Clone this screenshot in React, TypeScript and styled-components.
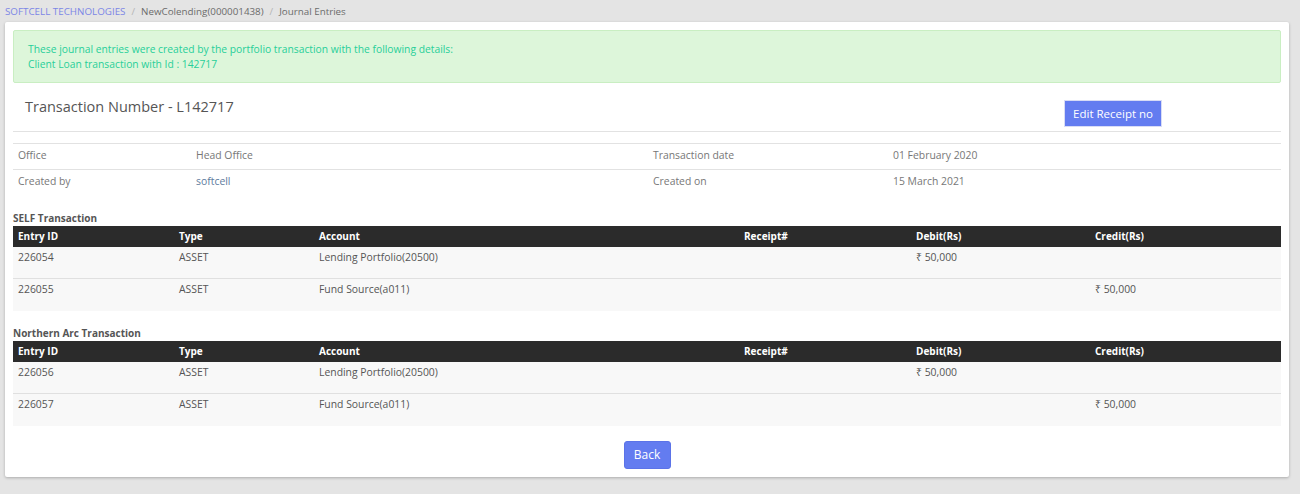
import React from "react";
import styled, { createGlobalStyle } from "styled-components";

const GlobalStyle = createGlobalStyle`
    html, body {
        margin: 0;
        padding: 0;
        background: #e4e4e4;
        font-family: "Open Sans", "Noto Sans", sans-serif;
        color: #666;
    }
    * { box-sizing: border-box; }
`;

const Page = styled.div`
    width: 1300px;
    height: 494px;
    padding: 0 11px 0 5px;
`;

const Breadcrumb = styled.nav`
    height: 22px;
    display: flex;
    align-items: center;
    font-size: 9.8px;
    color: #6b6b6b;
    white-space: nowrap;
`;

const Crumb = styled.span<{ $link?: boolean }>`
    color: ${(p) => (p.$link ? "#7c86e6" : "#6b6b6b")};
`;

const Sep = styled.span`
    color: #b5b5b5;
    margin: 0 6px;
`;

const Card = styled.div`
    background: #fff;
    padding: 8px;
    box-shadow: 0 1px 3px rgba(0, 0, 0, 0.25);
    border-radius: 2px;
    height: 455px;
`;

const Alert = styled.div`
    background: #ddf6da;
    border: 1px solid #c9eec2;
    border-radius: 2px;
    color: #27cf99;
    font-size: 10.3px;
    line-height: 15px;
    padding: 11px 14px 12px;
    height: 53px;
`;

const Header = styled.div`
    display: flex;
    justify-content: space-between;
    align-items: flex-start;
    padding: 14px 119px 4px 12px;
    border-bottom: 1px solid #e2e2e2;
    height: 49px;
`;

const Title = styled.h2`
    margin: 0;
    font-weight: 400;
    font-size: 14.5px;
    color: #555;
`;

const Button = styled.button<{ $radius?: number }>`
    background: #637cf0;
    color: #fff;
    border: 1px solid ${(p) => (p.$radius ? "#5b73e8" : "#d8dcf5")};
    border-radius: ${(p) => p.$radius ?? 0}px;
    font-family: "Open Sans", sans-serif;
    font-size: 11.5px;
    padding: 0 8px;
    height: 27px;
    margin-top: 3px;
`;

const InfoTable = styled.table`
    width: 100%;
    border-collapse: collapse;
    margin-top: 11px;
    font-size: 10.4px;
    color: #777;

    td {
        border-top: 1px solid #e2e2e2;
        padding: 0 5px 4px;
        height: 26px;
        vertical-align: middle;
    }
`;

const Value = styled.span<{ $accent?: boolean }>`
    color: ${(p) => (p.$accent ? "#5e7c9e" : "#777")};
`;

const SectionTitle = styled.div`
    font-size: 10px;
    font-weight: 700;
    color: #555;
    margin-top: 16px;
    height: 14px;
    line-height: 12px;
`;

const Grid = styled.table`
    width: 100%;
    border-collapse: collapse;
    font-size: 10.4px;

    th {
        background: #2b2b2b;
        color: #fff;
        font-weight: 700;
        text-align: left;
        padding: 0 5px;
        height: 21px;
        font-size: 10px;
    }

    td {
        background: #f8f8f8;
        color: #555;
        padding: 3px 5px 0;
        height: 32px;
        vertical-align: top;
        border-top: 1px solid #e0e0e0;
    }

    tbody tr:first-child td {
        border-top: none;
    }
`;

const Footer = styled.div`
    display: flex;
    justify-content: center;
    padding-top: 15px;
`;

const BackButton = styled(Button)`
    height: 28px;
    width: 47px;
    padding: 0;
    font-size: 12px;
    margin: 0;
`;

type Entry = { id: string; type: string; account: string; debit?: string; credit?: string };

const sections: { title: string; entries: Entry[] }[] = [
    {
        title: "SELF Transaction",
        entries: [
            { id: "226054", type: "ASSET", account: "Lending Portfolio(20500)", debit: "₹ 50,000" },
            { id: "226055", type: "ASSET", account: "Fund Source(a011)", credit: "₹ 50,000" },
        ],
    },
    {
        title: "Northern Arc Transaction",
        entries: [
            { id: "226056", type: "ASSET", account: "Lending Portfolio(20500)", debit: "₹ 50,000" },
            { id: "226057", type: "ASSET", account: "Fund Source(a011)", credit: "₹ 50,000" },
        ],
    },
];

const EntryTable = ({ entries }: { entries: Entry[] }) => (
    <Grid>
        <colgroup>
            <col style={{ width: 161 }} />
            <col style={{ width: 140 }} />
            <col style={{ width: 425 }} />
            <col style={{ width: 172 }} />
            <col style={{ width: 179 }} />
            <col />
        </colgroup>
        <thead>
            <tr>
                <th>Entry ID</th>
                <th>Type</th>
                <th>Account</th>
                <th>Receipt#</th>
                <th>Debit(Rs)</th>
                <th>Credit(Rs)</th>
            </tr>
        </thead>
        <tbody>
            {entries.map((e) => (
                <tr key={e.id}>
                    <td>{e.id}</td>
                    <td>{e.type}</td>
                    <td>{e.account}</td>
                    <td></td>
                    <td>{e.debit}</td>
                    <td>{e.credit}</td>
                </tr>
            ))}
        </tbody>
    </Grid>
);

const App = () => {
    return (
        <Page>
            <GlobalStyle />
            <Breadcrumb>
                <Crumb $link>SOFTCELL TECHNOLOGIES</Crumb>
                <Sep>/</Sep>
                <Crumb>NewColending(000001438)</Crumb>
                <Sep>/</Sep>
                <Crumb>Journal Entries</Crumb>
            </Breadcrumb>
            <Card>
                <Alert>
                    These journal entries were created by the portfolio transaction with the following details:
                    <br />
                    Client Loan transaction with Id : 142717
                </Alert>
                <Header>
                    <Title>Transaction Number - L142717</Title>
                    <Button>Edit Receipt no</Button>
                </Header>
                <InfoTable>
                    <colgroup>
                        <col style={{ width: 178 }} />
                        <col style={{ width: 457 }} />
                        <col style={{ width: 240 }} />
                        <col />
                    </colgroup>
                    <tbody>
                        <tr>
                            <td>Office</td>
                            <td><Value>Head Office</Value></td>
                            <td>Transaction date</td>
                            <td><Value>01 February 2020</Value></td>
                        </tr>
                        <tr>
                            <td>Created by</td>
                            <td><Value $accent>softcell</Value></td>
                            <td>Created on</td>
                            <td><Value>15 March 2021</Value></td>
                        </tr>
                    </tbody>
                </InfoTable>
                {sections.map((s) => (
                    <React.Fragment key={s.title}>
                        <SectionTitle>{s.title}</SectionTitle>
                        <EntryTable entries={s.entries} />
                    </React.Fragment>
                ))}
                <Footer>
                    <BackButton $radius={3}>Back</BackButton>
                </Footer>
            </Card>
        </Page>
    );
};

export default App;
